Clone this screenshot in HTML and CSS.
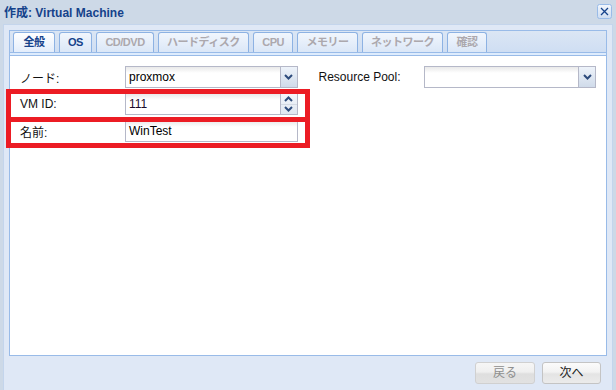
FILE: index.html
```html
<!DOCTYPE html>
<html lang="ja">
<head>
<meta charset="utf-8">
<link rel="stylesheet" href="styles.css">
</head>
<body>
<div class="window">
  <div class="titlebar">
    <span class="title">作成: Virtual Machine</span>
    <span class="close">
      <svg width="15" height="15" viewBox="0 0 15 15">
        <defs>
          <linearGradient id="cg" x1="0" y1="0" x2="0" y2="1">
            <stop offset="0" stop-color="#f3f7fd"/>
            <stop offset="1" stop-color="#cddcf0"/>
          </linearGradient>
        </defs>
        <rect x="0.5" y="0.5" width="14" height="14" rx="2" fill="url(#cg)" stroke="#99bbe8"/>
        <path d="M4 4 L11 11 M11 4 L4 11" stroke="#15428b" stroke-width="1.3" fill="none"/>
      </svg>
    </span>
  </div>
  <div class="wbody">
    <div class="panel">
      <div class="tabstrip">
        <div class="tab active">全般</div>
        <div class="tab">OS</div>
        <div class="tab off">CD/DVD</div>
        <div class="tab off">ハードディスク</div>
        <div class="tab off">CPU</div>
        <div class="tab off">メモリー</div>
        <div class="tab off">ネットワーク</div>
        <div class="tab off">確認</div>
      </div>
      <div class="spacer"></div>
      <div class="pbody">
        <div class="form">
          <div class="col">
            <div class="row">
              <label class="lbl">ノード:</label>
              <div class="field">
                <span class="val">proxmox</span>
                <span class="trigger">
                  <svg width="9" height="6" viewBox="0 0 9 6"><path d="M1 1 L4.5 4.5 L8 1" stroke="#2d4b7c" stroke-width="2" fill="none"/></svg>
                </span>
              </div>
            </div>
            <div class="row">
              <label class="lbl">VM ID:</label>
              <div class="field">
                <span class="val num">111</span>
                <span class="trigger spin">
                  <span class="half"><svg width="9" height="6" viewBox="0 0 9 6"><path d="M1 5 L4.5 1.5 L8 5" stroke="#2d4b7c" stroke-width="2" fill="none"/></svg></span>
                  <span class="half"><svg width="9" height="6" viewBox="0 0 9 6"><path d="M1 1 L4.5 4.5 L8 1" stroke="#2d4b7c" stroke-width="2" fill="none"/></svg></span>
                </span>
              </div>
            </div>
            <div class="row">
              <label class="lbl">名前:</label>
              <div class="field">
                <span class="val">WinTest</span>
              </div>
            </div>
          </div>
          <div class="col">
            <div class="row">
              <label class="lbl">Resource Pool:</label>
              <div class="field">
                <span class="val"></span>
                <span class="trigger">
                  <svg width="9" height="6" viewBox="0 0 9 6"><path d="M1 1 L4.5 4.5 L8 1" stroke="#2d4b7c" stroke-width="2" fill="none"/></svg>
                </span>
              </div>
            </div>
          </div>
        </div>
      </div>
    </div>
    <div class="footer">
      <button class="btn" disabled>戻る</button>
      <button class="btn">次へ</button>
    </div>
  </div>
</div>
<div class="mark m1"></div>
<div class="mark m2"></div>
</body>
</html>
```
FILE: styles.css
```css
html, body {
  margin: 0;
  padding: 0;
}
body {
  width: 616px;
  height: 390px;
  overflow: hidden;
  background: #cdd9e7;
  font-family: "Liberation Sans", "Noto Sans CJK JP", sans-serif;
  font-size: 12px;
  color: #000;
  position: relative;
}
.window {
  margin-left: 3px;
  width: 610px;
}
.titlebar {
  height: 24px;
  display: flex;
  align-items: center;
  justify-content: space-between;
  padding-left: 1px;
  box-sizing: border-box;
}
.title {
  font-weight: bold;
  font-size: 12px;
  color: #15428b;
  margin-top: -2px;
}
.close {
  display: flex;
  width: 15px;
  height: 15px;
  margin-right: 1px;
  margin-top: -1px;
}
.wbody {
  border: 1px solid #c4d5ec;
  border-bottom: none;
  background: #dfe8f6;
  padding: 5px;
  height: 366px;
  box-sizing: border-box;
  overflow: hidden;
}
.panel {
  border: 1px solid #99bbe8;
  height: 326px;
  box-sizing: border-box;
  display: flex;
  flex-direction: column;
  background: #fff;
}
.tabstrip {
  height: 22px;
  box-sizing: border-box;
  border-bottom: 1px solid #99bbe8;
  background: linear-gradient(#dbe6f4, #cfdef3);
  padding: 1px 0 0 3px;
  display: flex;
  align-items: flex-end;
  gap: 4px;
}
.tab {
  height: 20px;
  box-sizing: border-box;
  border: 1px solid #8db2e3;
  border-bottom: none;
  border-radius: 3px 3px 0 0;
  padding: 0 8px 0 8.5px;
  font-weight: bold;
  font-size: 11px;
  letter-spacing: -0.5px;
  line-height: 19px;
  color: #15428b;
  background: linear-gradient(#f1f6fd, #dbe7f7);
  white-space: nowrap;
}
.tab.active {
  padding: 0 9px 0 9.5px;
  background: linear-gradient(#ffffff, #e3edfb);
}
.tab.off {
  color: #aca8ad;
}
.spacer {
  height: 3px;
  box-sizing: border-box;
  background: #deecfd;
  border-bottom: 1px solid #99bbe8;
}
.pbody {
  flex: 1;
  padding: 10px 10px 0;
}
.form {
  display: grid;
  grid-template-columns: 1fr 1fr;
  column-gap: 21px;
}
.col {
  display: flex;
  flex-direction: column;
  gap: 5px;
}
.row {
  display: flex;
  align-items: center;
  height: 22px;
}
.lbl {
  width: 105px;
  flex: none;
  color: #111;
}
.field {
  flex: 1;
  height: 22px;
  box-sizing: border-box;
  border: 1px solid #b5b8c8;
  background: linear-gradient(#e9e9e9, #ffffff 6px);
  display: flex;
  align-items: center;
}
.val {
  flex: 1;
  padding-left: 3px;
  line-height: 20px;
}
.val.num {
  color: #1a0a2a;
}
.trigger {
  width: 16px;
  height: 100%;
  flex: none;
  border-left: 1px solid #b5b8c8;
  background: linear-gradient(#eef3fa, #d0dbea);
  display: flex;
  align-items: center;
  justify-content: center;
}
.trigger.spin {
  flex-direction: column;
  background: linear-gradient(#f3f6fb, #dfe6f0);
}
.half {
  flex: 1;
  display: flex;
  align-items: center;
  justify-content: center;
  width: 100%;
}
.half + .half {
  border-top: 1px solid #d3d9e3;
}
.footer {
  display: flex;
  justify-content: flex-end;
  gap: 7px;
  padding: 6px 6px 0 0;
}
.btn {
  width: 59px;
  height: 22px;
  box-sizing: border-box;
  border: 1px solid #c4c4c4;
  border-radius: 3px;
  background: linear-gradient(#fbfbfb 0, #f2f2f2 45%, #e4e4e4 55%, #ebebeb 100%);
  font-family: "Liberation Sans", "Noto Sans CJK JP", sans-serif;
  font-size: 12px;
  color: #222;
  padding: 0;
  line-height: 20px;
}
.btn[disabled] {
  width: 60px;
  color: #8e8e8e;
  border-color: #d0d0d0;
  background: linear-gradient(#f6f6f6 0, #efefef 45%, #dedede 55%, #e2e2e2 100%);
}
.mark {
  position: absolute;
  left: 6px;
  width: 304px;
  box-sizing: border-box;
  border: 5px solid #ec1c24;
}
.m1 {
  top: 89px;
  height: 33px;
}
.m2 {
  top: 117px;
  height: 31px;
}
```
